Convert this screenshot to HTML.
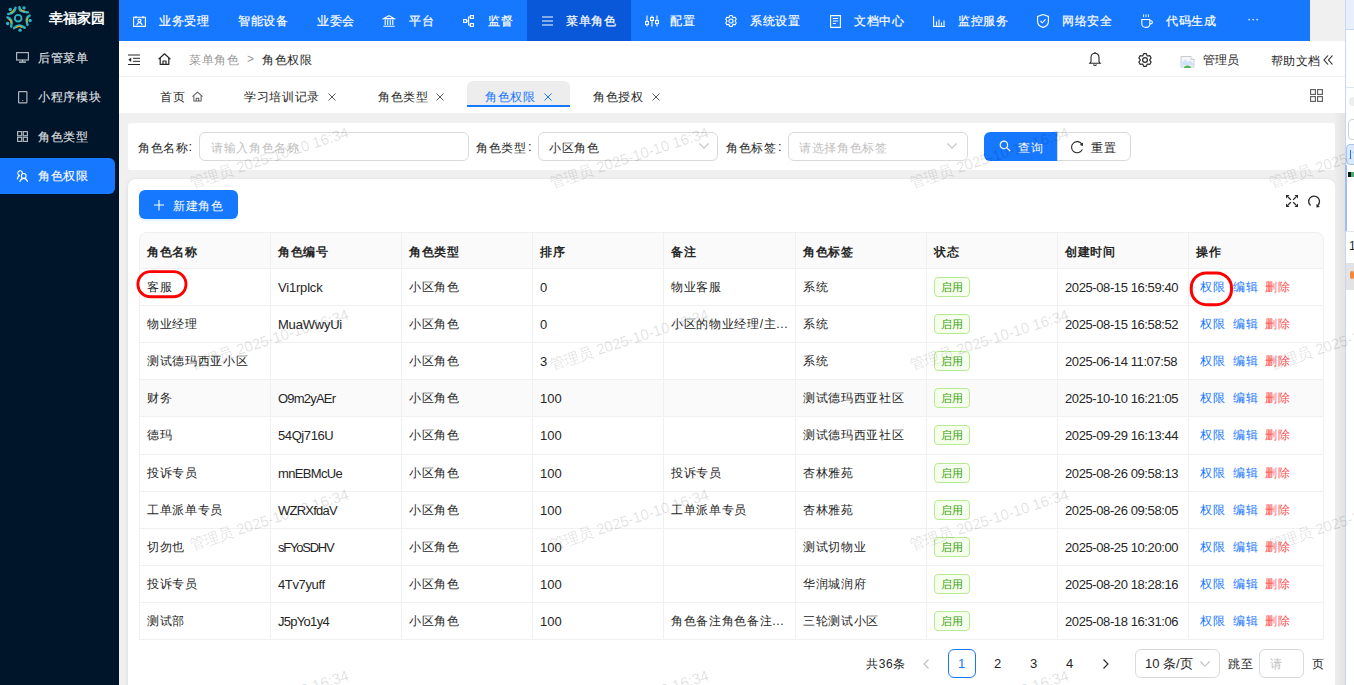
<!DOCTYPE html>
<html><head><meta charset="utf-8">
<style>
*{box-sizing:border-box;margin:0;padding:0}
html,body{width:1354px;height:685px;overflow:hidden;background:#f0f0f0;font-family:"Liberation Sans",sans-serif;font-size:13px;color:#262626}
.a{position:absolute;white-space:nowrap}
svg{position:absolute;overflow:visible}
#side{position:absolute;left:0;top:0;width:119px;height:685px;background:#001529}
#nav{position:absolute;left:119px;top:0;width:1191px;height:41px;background:#1677ff}
.nt{position:absolute;top:14px;color:#fff;font-size:12px;letter-spacing:.67px;line-height:14px;-webkit-text-stroke:.2px #fff}
.st{position:absolute;left:38px;color:rgba(255,255,255,.85);font-size:12px;letter-spacing:.67px;line-height:14px;-webkit-text-stroke:.15px rgba(255,255,255,.85)}
.c{position:absolute;white-space:nowrap;font-size:12px;letter-spacing:.67px;line-height:14px;color:#262626}
.l{position:absolute;white-space:nowrap;font-size:13px;line-height:14px;color:#262626}
.b{font-weight:bold}
.wm{position:absolute;color:rgba(0,0,0,.13);font-size:15px;letter-spacing:-0.1px;transform:rotate(-18deg);transform-origin:0 100%;white-space:nowrap;line-height:16px}
</style></head><body>
<div id="side">
  <!-- logo -->
  <svg style="left:3px;top:3px" width="32" height="32" viewBox="0 0 685 685">
    <g fill="none" stroke-linecap="round">
      <g stroke="#2ab4c2" stroke-width="52">
        <path d="M268 100 Q245 220 110 238"/><path d="M352 90 Q345 200 535 200"/><path d="M570 270 Q470 310 525 470"/><path d="M235 540 Q345 430 465 530"/><path d="M95 310 Q215 350 175 505"/>
      </g>
      <g stroke="#e8a81c" stroke-width="26">
        <path d="M228 140 Q215 195 165 205"/><path d="M390 140 Q392 172 460 175"/><path d="M528 318 Q500 345 515 410"/><path d="M285 525 Q345 478 400 520"/><path d="M130 352 Q190 375 180 430"/>
      </g>
      <circle cx="325" cy="325" r="72" stroke="#2ab4c2" stroke-width="40"/>
    </g>
    <g fill="#2ab4c2"><circle cx="155" cy="140" r="36"/><circle cx="450" cy="105" r="36"/><circle cx="580" cy="375" r="36"/><circle cx="365" cy="582" r="36"/><circle cx="100" cy="440" r="36"/></g>
  </svg>
  <div class="a" style="left:49px;top:10px;color:#fff;font-weight:bold;font-size:14px;line-height:16px">幸福家园</div>

  <!-- items -->
  <svg style="left:16px;top:52px" width="13" height="11" viewBox="0 0 13 11" fill="none" stroke="rgba(255,255,255,.68)" stroke-width="1.2">
    <rect x="0.6" y="0.6" width="11.8" height="7.4"/><path d="M6.5 8v1.4"/><path d="M3 9.3h7v1.6H3z" fill="rgba(255,255,255,.68)" stroke="none"/>
  </svg>
  <div class="st" style="top:51px">后管菜单</div>

  <svg style="left:17.5px;top:90.5px" width="10" height="13" viewBox="0 0 10 13" fill="none" stroke="rgba(255,255,255,.68)" stroke-width="1.2">
    <rect x="0.6" y="0.6" width="8.3" height="11.3" rx="0.6"/><circle cx="4.75" cy="9.6" r="0.6" fill="rgba(255,255,255,.68)" stroke="none"/>
  </svg>
  <div class="st" style="top:90px">小程序模块</div>

  <svg style="left:17px;top:131px" width="11" height="11" viewBox="0 0 11 11" fill="none" stroke="rgba(255,255,255,.68)" stroke-width="1.2">
    <rect x="0.6" y="0.6" width="4.1" height="4.1"/><rect x="6.3" y="0.6" width="4.1" height="4.1"/>
    <rect x="0.6" y="6.3" width="4.1" height="4.1"/><rect x="6.3" y="6.3" width="4.1" height="4.1"/>
  </svg>
  <div class="st" style="top:130px">角色类型</div>

  <div class="a" style="left:0;top:158px;width:115px;height:36px;background:#1677ff;border-radius:0 6px 6px 0"></div>
  <svg style="left:16px;top:170px" width="12" height="12" viewBox="0 0 12 12" fill="none" stroke="#fff" stroke-width="1.1" stroke-linecap="round">
    <path d="M6.3 3.9A2.3 2.3 0 1 0 3.4 5.3"/><path d="M1.3 9C1.8 7.3 2.6 6.2 3.4 5.5"/>
    <circle cx="7.7" cy="5.9" r="2.4"/><path d="M3.9 11.5C4.6 9.5 6 8.4 7.7 8.4S10.8 9.5 11.5 11.5"/>
  </svg>
  <div class="st" style="top:169px;color:#fff">角色权限</div>
</div>

<div id="nav">
  <div class="a" style="left:408px;top:0;width:104px;height:41px;background:#0958d9"></div>
  <!-- icons -->
  <svg style="left:14px;top:16px" width="13" height="11" viewBox="0 0 13 11" fill="none" stroke="#fff" stroke-width="1.1">
    <path d="M0.6 1.2h11.8v9.2H0.6z"/><path d="M3 0v2.4M10 0v2.4"/><circle cx="6.5" cy="4.6" r="1.5"/><path d="M3.8 9c0.4-1.6 1.4-2.4 2.7-2.4s2.3 0.8 2.7 2.4"/>
  </svg>
  <div class="nt" style="left:40px">业务受理</div>
  <div class="nt" style="left:119px">智能设备</div>
  <div class="nt" style="left:198px">业委会</div>
  <svg style="left:264px;top:15px" width="12" height="12" viewBox="0 0 12 12" fill="none" stroke="#fff" stroke-width="1.1">
    <path d="M0.8 3.6L6 0.7l5.2 2.9z"/><path d="M2.2 4.5v5.6M4.7 4.5v5.6M7.3 4.5v5.6M9.8 4.5v5.6M0.3 11.3h11.4"/>
  </svg>
  <div class="nt" style="left:290px">平台</div>
  <svg style="left:344px;top:15px" width="11" height="12" viewBox="0 0 11 12" fill="none" stroke="#fff" stroke-width="1.1">
    <rect x="0.6" y="4.6" width="3" height="2.8"/><rect x="7.4" y="0.6" width="3" height="2.8"/><rect x="7.4" y="8.6" width="3" height="2.8"/><path d="M3.6 6h2v-4h1.8M5.6 6v4h1.8"/>
  </svg>
  <div class="nt" style="left:369px">监督</div>
  <svg style="left:423px;top:16px" width="11" height="10" viewBox="0 0 11 10" fill="none" stroke="#fff" stroke-width="1">
    <path d="M0 1h11M0 5h11M0 9h11"/>
  </svg>
  <div class="nt" style="left:447px">菜单角色</div>
  <svg style="left:527px;top:15px" width="12" height="12" viewBox="0 0 12 12" fill="none" stroke="#fff" stroke-width="1.1">
    <path d="M1 0.5v11M6 0.5v11M11 0.5v11"/><rect x="-0.4" y="6.5" width="2.8" height="3" fill="#1677ff"/><rect x="4.6" y="2.5" width="2.8" height="3" fill="#1677ff"/><rect x="9.6" y="5.5" width="2.8" height="3" fill="#1677ff"/>
  </svg>
  <div class="nt" style="left:551px">配置</div>
  <svg style="left:606px;top:15px" width="12" height="12" viewBox="0 0 14 14" fill="none" stroke="#fff" stroke-width="1.3" stroke-linejoin="round">
    <path d="M5.71 0.63 L8.29 0.63 L9.30 3.02 L11.87 2.70 L13.16 4.93 L11.60 7.00 L13.16 9.07 L11.87 11.30 L9.30 10.98 L8.29 13.37 L5.71 13.37 L4.70 10.98 L2.13 11.30 L0.84 9.07 L2.40 7.00 L0.84 4.93 L2.13 2.70 L4.70 3.02Z"/><circle cx="7" cy="7" r="2.4"/>
  </svg>
  <div class="nt" style="left:631px">系统设置</div>
  <svg style="left:711px;top:15px" width="11" height="13" viewBox="0 0 11 13" fill="none" stroke="#fff" stroke-width="1.1">
    <path d="M0.6 0.6h9.8v11.8H0.6z"/><path d="M2.8 3.5h5.4M2.8 6h5.4M2.8 8.5h3"/>
  </svg>
  <div class="nt" style="left:735px">文档中心</div>
  <svg style="left:814px;top:16px" width="12" height="11" viewBox="0 0 12 11" fill="none" stroke="#fff" stroke-width="1.1">
    <path d="M0.6 0v10.4H12"/><path d="M3.5 9.5v-4M6 9.5v-6M8.5 9.5v-3M11 9.5v-5"/>
  </svg>
  <div class="nt" style="left:839px">监控服务</div>
  <svg style="left:918px;top:14px" width="12" height="14" viewBox="0 0 12 14" fill="none" stroke="#fff" stroke-width="1.1">
    <path d="M6 0.6L11.4 2.4v5C11.4 10.6 8.6 12.6 6 13.4 3.4 12.6 0.6 10.6 0.6 7.4v-5z"/><path d="M3.5 7l1.8 1.8L8.6 5.3"/>
  </svg>
  <div class="nt" style="left:943px">网络安全</div>
  <svg style="left:1022px;top:14px" width="12" height="14" viewBox="0 0 12 14" fill="none" stroke="#fff" stroke-width="1.1">
    <path d="M0.8 5.5h8v4.5c0 2-1.6 3.4-4 3.4s-4-1.4-4-3.4z"/><path d="M8.8 6.8h1c1 0 1.6 0.6 1.6 1.5s-0.6 1.6-1.6 1.6h-1"/><path d="M2.6 0.3v2.8M5 0.3v2.8M7.4 0.3v2.8" stroke-width="0.9"/>
  </svg>
  <div class="nt" style="left:1047px">代码生成</div>
  <div class="a" style="left:1128px;top:12px;color:#fff;font-size:12px;line-height:14px;letter-spacing:0px">···</div>
</div>

<div class="a" style="left:119px;top:41px;width:1226px;height:35px;background:#fff"></div>
<div class="a" style="left:119px;top:76px;width:1226px;height:1px;background:#f0f0f0"></div>
<svg style="left:128px;top:54px" width="12" height="11" viewBox="0 0 12 11" fill="none" stroke="#262626" stroke-width="1">
<path d="M0 1h12M5 4.3h7M5 7.3h7M0 10.5h12"/><path d="M3.2 3.6L0.4 5.8 3.2 8z" fill="#262626" stroke="none"/></svg>
<svg style="left:158px;top:53px" width="13" height="12" viewBox="0 0 13 12" fill="none" stroke="#262626" stroke-width="1.2" stroke-linejoin="round">
<path d="M0.6 6.2L6.5 0.8l5.9 5.4"/><path d="M2.2 5v6.4h8.6V5"/><path d="M5 11.4V8h3v3.4"/></svg>
<div class="c" style="left:189px;top:53px;color:rgba(0,0,0,.45)">菜单角色</div>
<div class="l" style="left:247px;top:52px;color:rgba(0,0,0,.45);font-size:12px">&gt;</div>
<div class="c" style="left:262px;top:53px;">角色权限</div>
<svg style="left:1089px;top:52px" width="12" height="14" viewBox="0 0 12 14" fill="none" stroke="#262626" stroke-width="1.1">
<path d="M6 1.2c-2.4 0-4 1.8-4 4.3v4.3L0.8 11.2h10.4L10 9.8V5.5c0-2.5-1.6-4.3-4-4.3z"/><path d="M6 0v1.2M4.5 12.5c0.3 0.8 0.8 1 1.5 1s1.2-0.2 1.5-1"/></svg>
<svg style="left:1138px;top:53px" width="14" height="14" viewBox="0 0 14 14" fill="none" stroke="#262626" stroke-width="1.2" stroke-linejoin="round">
<path d="M5.71 0.63 L8.29 0.63 L9.30 3.02 L11.87 2.70 L13.16 4.93 L11.60 7.00 L13.16 9.07 L11.87 11.30 L9.30 10.98 L8.29 13.37 L5.71 13.37 L4.70 10.98 L2.13 11.30 L0.84 9.07 L2.40 7.00 L0.84 4.93 L2.13 2.70 L4.70 3.02Z"/><circle cx="7" cy="7" r="2.4"/></svg>
<svg style="left:1180px;top:55px" width="15" height="13" viewBox="0 0 15 13">
<path d="M1 1.5h10l3 3v7.5H1z" fill="#f4f6f8" stroke="#c9ced6" stroke-width="1"/><path d="M11 1.5v3h3" fill="#fff" stroke="#c9ced6"/>
<path d="M2 7.5l3-3 3 2.5 2-1.5 3 2.5v2.5H2z" fill="#cfe3f7"/><path d="M4 13c0-1.5 1.5-2.5 3.5-2.5S11 11.5 11 13z" fill="#52b452"/></svg>
<div class="c" style="left:1203px;top:53px;letter-spacing:.1px">管理员</div>
<div class="c" style="left:1271px;top:54px;letter-spacing:.4px">帮助文档</div>
<svg style="left:1323px;top:55px" width="10" height="10" viewBox="0 0 10 10" fill="none" stroke="#262626" stroke-width="1.1">
<path d="M5 0.5L1 5l4 4.5M9.5 0.5L5.5 5l4 4.5"/></svg>
<div class="a" style="left:119px;top:77px;width:1226px;height:36px;background:#fff"></div>
<div class="c" style="left:160px;top:90px;">首页</div>
<svg style="left:192px;top:91px" width="11" height="11" viewBox="0 0 13 12" fill="none" stroke="#595959" stroke-width="1.2" stroke-linejoin="round">
<path d="M0.6 6.2L6.5 0.8l5.9 5.4"/><path d="M2.2 5v6.4h8.6V5"/><path d="M5 11.4V8h3v3.4"/></svg>
<div class="c" style="left:244px;top:90px;">学习培训记录</div>
<svg style="left:328px;top:93px" width="8" height="8" viewBox="0 0 8 8" fill="none" stroke="#595959" stroke-width="1"><path d="M0.5 0.5l7 7M7.5 0.5l-7 7"/></svg>
<div class="c" style="left:378px;top:90px;">角色类型</div>
<svg style="left:436px;top:93px" width="8" height="8" viewBox="0 0 8 8" fill="none" stroke="#595959" stroke-width="1"><path d="M0.5 0.5l7 7M7.5 0.5l-7 7"/></svg>
<div class="a" style="left:467px;top:81px;width:103px;height:26px;background:#ededed;border-radius:6px 6px 0 0"></div>
<div class="a" style="left:467px;top:105px;width:103px;height:2px;background:#1677ff"></div>
<div class="c" style="left:485px;top:90px;color:#1677ff">角色权限</div>
<svg style="left:544px;top:93px" width="8" height="8" viewBox="0 0 8 8" fill="none" stroke="#1677ff" stroke-width="1"><path d="M0.5 0.5l7 7M7.5 0.5l-7 7"/></svg>
<div class="c" style="left:593px;top:90px;">角色授权</div>
<svg style="left:652px;top:93px" width="8" height="8" viewBox="0 0 8 8" fill="none" stroke="#595959" stroke-width="1"><path d="M0.5 0.5l7 7M7.5 0.5l-7 7"/></svg>
<svg style="left:1310px;top:89px" width="13" height="13" viewBox="0 0 13 13" fill="none" stroke="#595959" stroke-width="1.1">
<rect x="0.6" y="0.6" width="4.8" height="4.8"/><rect x="7.6" y="0.6" width="4.8" height="4.8"/><rect x="0.6" y="7.6" width="4.8" height="4.8"/><rect x="7.6" y="7.6" width="4.8" height="4.8"/></svg>
<div class="a" style="left:128px;top:123px;width:1207px;height:47px;background:#fff;border-radius:2px"></div>
<div class="c" style="left:138px;top:141px;">角色名称</div>
<div class="l" style="left:188.5px;top:140px;font-size:13px">:</div>
<div class="a" style="left:199px;top:132px;width:270px;height:29px;border:1px solid #d9d9d9;border-radius:6px;background:#fff"></div>
<div class="c" style="left:211px;top:141px;color:#bfbfbf">请输入角色名称</div>
<div class="c" style="left:476px;top:141px;">角色类型</div>
<div class="l" style="left:528px;top:140px;font-size:13px">:</div>
<div class="a" style="left:538px;top:132px;width:180px;height:29px;border:1px solid #d9d9d9;border-radius:6px;background:#fff"></div>
<div class="c" style="left:549px;top:141px;">小区角色</div>
<svg style="left:699px;top:143px" width="10" height="6" viewBox="0 0 10 6" fill="none" stroke="#bfbfbf" stroke-width="1.1"><path d="M0.5 0.5L5 5.3 9.5 0.5"/></svg>
<div class="c" style="left:726px;top:141px;">角色标签</div>
<div class="l" style="left:778px;top:140px;font-size:13px">:</div>
<div class="a" style="left:788px;top:132px;width:180px;height:29px;border:1px solid #d9d9d9;border-radius:6px;background:#fff"></div>
<div class="c" style="left:799px;top:141px;color:#bfbfbf">请选择角色标签</div>
<svg style="left:947px;top:143px" width="10" height="6" viewBox="0 0 10 6" fill="none" stroke="#bfbfbf" stroke-width="1.1"><path d="M0.5 0.5L5 5.3 9.5 0.5"/></svg>
<div class="a" style="left:984px;top:132px;width:74px;height:29px;background:#1677ff;border-radius:6px 0 0 6px"></div>
<svg style="left:999px;top:140px" width="12" height="12" viewBox="0 0 12 12" fill="none" stroke="#fff" stroke-width="1.2">
<circle cx="4.9" cy="4.9" r="3.7"/><path d="M7.6 7.6L11.2 11.2"/></svg>
<div class="c" style="left:1018px;top:141px;color:#fff">查询</div>
<div class="a" style="left:1057px;top:132px;width:74px;height:29px;border:1px solid #d9d9d9;border-radius:0 6px 6px 0;background:#fff"></div>
<svg style="left:1071px;top:141px" width="12" height="12" viewBox="0 0 12 12" fill="none" stroke="#262626" stroke-width="1.1">
<path d="M11 3.4A5.6 5.6 0 1 0 11.3 8.4"/><path d="M12 1.6L11.8 5 8.8 4.1z" fill="#262626" stroke="none"/></svg>
<div class="c" style="left:1091px;top:141px;">重置</div>
<div class="a" style="left:128px;top:179px;width:1207px;height:520px;background:#fff;border-radius:8px;box-shadow:0 1px 5px rgba(0,0,0,.09)"></div>
<div class="a" style="left:139px;top:190px;width:99px;height:29px;background:#1677ff;border-radius:6px;box-shadow:0 2px 0 rgba(5,145,255,.1)"></div>
<svg style="left:154px;top:200px" width="10" height="10" viewBox="0 0 10 10" fill="none" stroke="#fff" stroke-width="1.1"><path d="M5 0v10.6M0 5h10"/></svg>
<div class="c" style="left:173px;top:198.5px;color:#fff">新建角色</div>
<svg style="left:1286px;top:195px" width="12" height="12" viewBox="0 0 12 12" fill="none" stroke="#262626" stroke-width="1.3">
<path d="M2 2l2.9 2.9M10 2L7.1 4.9M2 10l2.9-2.9M10 10L7.1 7.1"/>
<path d="M0 0h3.6L0 3.6zM12 0H8.4L12 3.6zM0 12h3.6L0 8.4zM12 12H8.4L12 8.4z" fill="#262626" stroke="none"/></svg>
<svg style="left:1307px;top:195px" width="13" height="13" viewBox="0 0 13 13" fill="none" stroke="#262626" stroke-width="1.3">
<path d="M3.6 10.6A5.4 5.4 0 1 1 11 10.2"/><path d="M9.6 8.8L9.4 12.4 12.8 12z" fill="#262626" stroke="none"/></svg>
<div class="a" style="left:139px;top:232px;width:1185px;height:37px;background:#fafafa;border:1px solid #f0f0f0;border-bottom:0;border-radius:8px 8px 0 0"></div>
<div class="a" style="left:139px;top:379px;width:1184px;height:37px;background:#fafafa"></div>
<div class="a" style="left:139px;top:268px;width:1184px;height:1px;background:#f0f0f0"></div>
<div class="a" style="left:139px;top:305px;width:1184px;height:1px;background:#f0f0f0"></div>
<div class="a" style="left:139px;top:342px;width:1184px;height:1px;background:#f0f0f0"></div>
<div class="a" style="left:139px;top:379px;width:1184px;height:1px;background:#f0f0f0"></div>
<div class="a" style="left:139px;top:416px;width:1184px;height:1px;background:#f0f0f0"></div>
<div class="a" style="left:139px;top:454px;width:1184px;height:1px;background:#f0f0f0"></div>
<div class="a" style="left:139px;top:491px;width:1184px;height:1px;background:#f0f0f0"></div>
<div class="a" style="left:139px;top:528px;width:1184px;height:1px;background:#f0f0f0"></div>
<div class="a" style="left:139px;top:565px;width:1184px;height:1px;background:#f0f0f0"></div>
<div class="a" style="left:139px;top:602px;width:1184px;height:1px;background:#f0f0f0"></div>
<div class="a" style="left:139px;top:639px;width:1184px;height:1px;background:#f0f0f0"></div>
<div class="a" style="left:139px;top:242px;width:1px;height:397px;background:#f0f0f0"></div>
<div class="a" style="left:270px;top:232px;width:1px;height:407px;background:#f0f0f0"></div>
<div class="a" style="left:401px;top:232px;width:1px;height:407px;background:#f0f0f0"></div>
<div class="a" style="left:532px;top:232px;width:1px;height:407px;background:#f0f0f0"></div>
<div class="a" style="left:663px;top:232px;width:1px;height:407px;background:#f0f0f0"></div>
<div class="a" style="left:795px;top:232px;width:1px;height:407px;background:#f0f0f0"></div>
<div class="a" style="left:926px;top:232px;width:1px;height:407px;background:#f0f0f0"></div>
<div class="a" style="left:1057px;top:232px;width:1px;height:407px;background:#f0f0f0"></div>
<div class="a" style="left:1188px;top:232px;width:1px;height:407px;background:#f0f0f0"></div>
<div class="a" style="left:1323px;top:242px;width:1px;height:397px;background:#f0f0f0"></div>
<div class="c" style="left:147px;top:245px;font-weight:bold">角色名称</div>
<div class="c" style="left:278px;top:245px;font-weight:bold">角色编号</div>
<div class="c" style="left:409px;top:245px;font-weight:bold">角色类型</div>
<div class="c" style="left:540px;top:245px;font-weight:bold">排序</div>
<div class="c" style="left:671px;top:245px;font-weight:bold">备注</div>
<div class="c" style="left:803px;top:245px;font-weight:bold">角色标签</div>
<div class="c" style="left:934px;top:245px;font-weight:bold">状态</div>
<div class="c" style="left:1065px;top:245px;font-weight:bold">创建时间</div>
<div class="c" style="left:1196px;top:245px;font-weight:bold">操作</div>
<div class="c" style="left:147px;top:280px;">客服</div>
<div class="l" style="left:278px;top:281px;letter-spacing:-0.19px">Vi1rplck</div>
<div class="c" style="left:409px;top:280px;">小区角色</div>
<div class="l" style="left:540px;top:281px;">0</div>
<div class="c" style="left:671px;top:280px;">物业客服</div>
<div class="c" style="left:803px;top:280px;">系统</div>
<div class="a" style="left:934px;top:277px;width:36px;height:20px;background:#f6ffed;border:1px solid #b7eb8f;border-radius:4px"></div>
<div class="c" style="left:941px;top:280px;color:#389e0d;font-size:11px;letter-spacing:.3px;line-height:14px">启用</div>
<div class="l" style="left:1065px;top:281px;letter-spacing:-0.4px">2025-08-15 16:59:40</div>
<div class="c" style="left:1200px;top:280px;color:#1677ff">权限</div>
<div class="c" style="left:1233px;top:280px;color:#1677ff">编辑</div>
<div class="c" style="left:1265px;top:280px;color:#ff4d4f">删除</div>
<div class="c" style="left:147px;top:317px;">物业经理</div>
<div class="l" style="left:278px;top:318px;letter-spacing:-0.21px">MuaWwyUi</div>
<div class="c" style="left:409px;top:317px;">小区角色</div>
<div class="l" style="left:540px;top:318px;">0</div>
<div class="c" style="left:671px;top:317px;">小区的物业经理/主...</div>
<div class="c" style="left:803px;top:317px;">系统</div>
<div class="a" style="left:934px;top:314px;width:36px;height:20px;background:#f6ffed;border:1px solid #b7eb8f;border-radius:4px"></div>
<div class="c" style="left:941px;top:317px;color:#389e0d;font-size:11px;letter-spacing:.3px;line-height:14px">启用</div>
<div class="l" style="left:1065px;top:318px;letter-spacing:-0.4px">2025-08-15 16:58:52</div>
<div class="c" style="left:1200px;top:317px;color:#1677ff">权限</div>
<div class="c" style="left:1233px;top:317px;color:#1677ff">编辑</div>
<div class="c" style="left:1265px;top:317px;color:#ff4d4f">删除</div>
<div class="c" style="left:147px;top:354px;">测试德玛西亚小区</div>
<div class="c" style="left:409px;top:354px;">小区角色</div>
<div class="l" style="left:540px;top:355px;">3</div>
<div class="c" style="left:803px;top:354px;">系统</div>
<div class="a" style="left:934px;top:351px;width:36px;height:20px;background:#f6ffed;border:1px solid #b7eb8f;border-radius:4px"></div>
<div class="c" style="left:941px;top:354px;color:#389e0d;font-size:11px;letter-spacing:.3px;line-height:14px">启用</div>
<div class="l" style="left:1065px;top:355px;letter-spacing:-0.4px">2025-06-14 11:07:58</div>
<div class="c" style="left:1200px;top:354px;color:#1677ff">权限</div>
<div class="c" style="left:1233px;top:354px;color:#1677ff">编辑</div>
<div class="c" style="left:1265px;top:354px;color:#ff4d4f">删除</div>
<div class="c" style="left:147px;top:391px;">财务</div>
<div class="l" style="left:278px;top:392px;letter-spacing:-0.79px">O9m2yAEr</div>
<div class="c" style="left:409px;top:391px;">小区角色</div>
<div class="l" style="left:540px;top:392px;">100</div>
<div class="c" style="left:803px;top:391px;">测试德玛西亚社区</div>
<div class="a" style="left:934px;top:388px;width:36px;height:20px;background:#f6ffed;border:1px solid #b7eb8f;border-radius:4px"></div>
<div class="c" style="left:941px;top:391px;color:#389e0d;font-size:11px;letter-spacing:.3px;line-height:14px">启用</div>
<div class="l" style="left:1065px;top:392px;letter-spacing:-0.4px">2025-10-10 16:21:05</div>
<div class="c" style="left:1200px;top:391px;color:#1677ff">权限</div>
<div class="c" style="left:1233px;top:391px;color:#1677ff">编辑</div>
<div class="c" style="left:1265px;top:391px;color:#ff4d4f">删除</div>
<div class="c" style="left:147px;top:428px;">德玛</div>
<div class="l" style="left:278px;top:429px;letter-spacing:-0.4px">54Qj716U</div>
<div class="c" style="left:409px;top:428px;">小区角色</div>
<div class="l" style="left:540px;top:429px;">100</div>
<div class="c" style="left:803px;top:428px;">测试德玛西亚社区</div>
<div class="a" style="left:934px;top:425px;width:36px;height:20px;background:#f6ffed;border:1px solid #b7eb8f;border-radius:4px"></div>
<div class="c" style="left:941px;top:428px;color:#389e0d;font-size:11px;letter-spacing:.3px;line-height:14px">启用</div>
<div class="l" style="left:1065px;top:429px;letter-spacing:-0.4px">2025-09-29 16:13:44</div>
<div class="c" style="left:1200px;top:428px;color:#1677ff">权限</div>
<div class="c" style="left:1233px;top:428px;color:#1677ff">编辑</div>
<div class="c" style="left:1265px;top:428px;color:#ff4d4f">删除</div>
<div class="c" style="left:147px;top:466px;">投诉专员</div>
<div class="l" style="left:278px;top:467px;letter-spacing:-0.66px">mnEBMcUe</div>
<div class="c" style="left:409px;top:466px;">小区角色</div>
<div class="l" style="left:540px;top:467px;">100</div>
<div class="c" style="left:671px;top:466px;">投诉专员</div>
<div class="c" style="left:803px;top:466px;">杏林雅苑</div>
<div class="a" style="left:934px;top:463px;width:36px;height:20px;background:#f6ffed;border:1px solid #b7eb8f;border-radius:4px"></div>
<div class="c" style="left:941px;top:466px;color:#389e0d;font-size:11px;letter-spacing:.3px;line-height:14px">启用</div>
<div class="l" style="left:1065px;top:467px;letter-spacing:-0.4px">2025-08-26 09:58:13</div>
<div class="c" style="left:1200px;top:466px;color:#1677ff">权限</div>
<div class="c" style="left:1233px;top:466px;color:#1677ff">编辑</div>
<div class="c" style="left:1265px;top:466px;color:#ff4d4f">删除</div>
<div class="c" style="left:147px;top:503px;">工单派单专员</div>
<div class="l" style="left:278px;top:504px;letter-spacing:-0.77px">WZRXfdaV</div>
<div class="c" style="left:409px;top:503px;">小区角色</div>
<div class="l" style="left:540px;top:504px;">100</div>
<div class="c" style="left:671px;top:503px;">工单派单专员</div>
<div class="c" style="left:803px;top:503px;">杏林雅苑</div>
<div class="a" style="left:934px;top:500px;width:36px;height:20px;background:#f6ffed;border:1px solid #b7eb8f;border-radius:4px"></div>
<div class="c" style="left:941px;top:503px;color:#389e0d;font-size:11px;letter-spacing:.3px;line-height:14px">启用</div>
<div class="l" style="left:1065px;top:504px;letter-spacing:-0.4px">2025-08-26 09:58:05</div>
<div class="c" style="left:1200px;top:503px;color:#1677ff">权限</div>
<div class="c" style="left:1233px;top:503px;color:#1677ff">编辑</div>
<div class="c" style="left:1265px;top:503px;color:#ff4d4f">删除</div>
<div class="c" style="left:147px;top:540px;">切勿也</div>
<div class="l" style="left:278px;top:541px;letter-spacing:-1.23px">sFYoSDHV</div>
<div class="c" style="left:409px;top:540px;">小区角色</div>
<div class="l" style="left:540px;top:541px;">100</div>
<div class="c" style="left:803px;top:540px;">测试切物业</div>
<div class="a" style="left:934px;top:537px;width:36px;height:20px;background:#f6ffed;border:1px solid #b7eb8f;border-radius:4px"></div>
<div class="c" style="left:941px;top:540px;color:#389e0d;font-size:11px;letter-spacing:.3px;line-height:14px">启用</div>
<div class="l" style="left:1065px;top:541px;letter-spacing:-0.4px">2025-08-25 10:20:00</div>
<div class="c" style="left:1200px;top:540px;color:#1677ff">权限</div>
<div class="c" style="left:1233px;top:540px;color:#1677ff">编辑</div>
<div class="c" style="left:1265px;top:540px;color:#ff4d4f">删除</div>
<div class="c" style="left:147px;top:577px;">投诉专员</div>
<div class="l" style="left:278px;top:578px;letter-spacing:-0.37px">4Tv7yuff</div>
<div class="c" style="left:409px;top:577px;">小区角色</div>
<div class="l" style="left:540px;top:578px;">100</div>
<div class="c" style="left:803px;top:577px;">华润城润府</div>
<div class="a" style="left:934px;top:574px;width:36px;height:20px;background:#f6ffed;border:1px solid #b7eb8f;border-radius:4px"></div>
<div class="c" style="left:941px;top:577px;color:#389e0d;font-size:11px;letter-spacing:.3px;line-height:14px">启用</div>
<div class="l" style="left:1065px;top:578px;letter-spacing:-0.4px">2025-08-20 18:28:16</div>
<div class="c" style="left:1200px;top:577px;color:#1677ff">权限</div>
<div class="c" style="left:1233px;top:577px;color:#1677ff">编辑</div>
<div class="c" style="left:1265px;top:577px;color:#ff4d4f">删除</div>
<div class="c" style="left:147px;top:614px;">测试部</div>
<div class="l" style="left:278px;top:615px;letter-spacing:-0.71px">J5pYo1y4</div>
<div class="c" style="left:409px;top:614px;">小区角色</div>
<div class="l" style="left:540px;top:615px;">100</div>
<div class="c" style="left:671px;top:614px;">角色备注角色备注...</div>
<div class="c" style="left:803px;top:614px;">三轮测试小区</div>
<div class="a" style="left:934px;top:611px;width:36px;height:20px;background:#f6ffed;border:1px solid #b7eb8f;border-radius:4px"></div>
<div class="c" style="left:941px;top:614px;color:#389e0d;font-size:11px;letter-spacing:.3px;line-height:14px">启用</div>
<div class="l" style="left:1065px;top:615px;letter-spacing:-0.4px">2025-08-18 16:31:06</div>
<div class="c" style="left:1200px;top:614px;color:#1677ff">权限</div>
<div class="c" style="left:1233px;top:614px;color:#1677ff">编辑</div>
<div class="c" style="left:1265px;top:614px;color:#ff4d4f">删除</div>
<div class="c" style="left:866px;top:657px;">共36条</div>
<svg style="left:923px;top:659px" width="6" height="10" viewBox="0 0 6 10" fill="none" stroke="#bfbfbf" stroke-width="1.1"><path d="M5.5 0.5L1 5l4.5 4.5"/></svg>
<div class="a" style="left:948px;top:649px;width:28px;height:29px;border:1px solid #1677ff;border-radius:6px"></div>
<div class="l" style="left:958px;top:657px;color:#1677ff">1</div>
<div class="l" style="left:994px;top:657px;">2</div>
<div class="l" style="left:1030px;top:657px;">3</div>
<div class="l" style="left:1066px;top:657px;">4</div>
<svg style="left:1103px;top:659px" width="6" height="10" viewBox="0 0 6 10" fill="none" stroke="#262626" stroke-width="1.1"><path d="M0.5 0.5L5 5l-4.5 4.5"/></svg>
<div class="a" style="left:1135px;top:649px;width:85px;height:29px;border:1px solid #d9d9d9;border-radius:6px"></div>
<div class="l" style="left:1145px;top:657px;">10 条/页</div>
<svg style="left:1200px;top:661px" width="10" height="6" viewBox="0 0 10 6" fill="none" stroke="#bfbfbf" stroke-width="1.1"><path d="M0.5 0.5L5 5.3 9.5 0.5"/></svg>
<div class="c" style="left:1228px;top:657px;">跳至</div>
<div class="a" style="left:1259px;top:649px;width:45px;height:29px;border:1px solid #d9d9d9;border-radius:6px"></div>
<div class="c" style="left:1270px;top:657px;color:#bfbfbf">请</div>
<div class="c" style="left:1312px;top:657px;">页</div>
<svg style="left:0;top:0" width="1354" height="685"><rect x="137.9" y="271.6" width="48.1" height="25.2" rx="12.6" fill="none" stroke="#ff0000" stroke-width="2.9"/><rect x="1191.25" y="272.9" width="40.25" height="31.8" rx="15" fill="none" stroke="#ff0000" stroke-width="3"/></svg>
<div class="a" style="left:1310px;top:0px;width:35px;height:41px;background:#f0f0f0"></div>
<div class="a" style="left:1335px;top:113px;width:10px;height:572px;background:linear-gradient(to right,#eeeeee,#e3e3e3)"></div>
<div class="a" style="left:1345px;top:0px;width:9px;height:685px;background:#fff"></div>
<div class="a" style="left:1346px;top:0px;width:8px;height:29px;background:#e9f0fb"></div>
<div class="a" style="left:1346px;top:29px;width:8px;height:1px;background:#c5d8f5"></div>
<div class="a" style="left:1346px;top:87px;width:8px;height:1px;background:#dfe6f0"></div>
<div class="a" style="left:1349px;top:97px;width:8px;height:9px;background:#eceef2;border-radius:4px"></div>
<div class="a" style="left:1348px;top:119px;width:10px;height:21px;border:1px solid #cfd3d9;border-radius:4px"></div>
<div class="a" style="left:1346px;top:144px;width:10px;height:21px;background:#dce8fb;border:1px solid #a9c4f0;border-radius:4px 0 0 4px"></div>
<div class="a" style="left:1350px;top:150px;width:1px;height:9px;background:#1677ff"></div>
<div class="a" style="left:1348px;top:172px;width:3px;height:5px;background:#111"></div>
<div class="a" style="left:1351px;top:172px;width:3px;height:5px;background:#3cb371"></div>
<div class="a" style="left:1346px;top:231px;width:8px;height:1px;background:#dfe6f0"></div>
<div class="a" style="left:1349px;top:239px;font-size:12px;line-height:14px;color:#262626">1</div>
<div class="a" style="left:1346px;top:263px;width:8px;height:27px;background:#e3e3e3"></div>
<div class="a" style="left:1350px;top:271px;width:4px;height:8px;background:#f0883e;border-radius:2px"></div>
<div class="a" style="left:1345px;top:0px;width:1px;height:685px;background:#c5d8f5"></div>
<div class="a" style="left:1345px;top:165px;width:2px;height:66px;background:#9dbcf0"></div>
<div class="wm" style="left:192.8px;top:175.2px">管理员 2025-10-10 16:34</div>
<div class="wm" style="left:552.5px;top:175.2px">管理员 2025-10-10 16:34</div>
<div class="wm" style="left:912.5px;top:175.2px">管理员 2025-10-10 16:34</div>
<div class="wm" style="left:1271.5px;top:175.2px">管理员 2025-10-10 16:34</div>
<div class="wm" style="left:192.8px;top:357px">管理员 2025-10-10 16:34</div>
<div class="wm" style="left:552.5px;top:357px">管理员 2025-10-10 16:34</div>
<div class="wm" style="left:912.5px;top:357px">管理员 2025-10-10 16:34</div>
<div class="wm" style="left:1271.5px;top:357px">管理员 2025-10-10 16:34</div>
<div class="wm" style="left:192.8px;top:536.8px">管理员 2025-10-10 16:34</div>
<div class="wm" style="left:552.5px;top:536.8px">管理员 2025-10-10 16:34</div>
<div class="wm" style="left:912.5px;top:536.8px">管理员 2025-10-10 16:34</div>
<div class="wm" style="left:1271.5px;top:536.8px">管理员 2025-10-10 16:34</div>
<div class="wm" style="left:192.8px;top:717.5px">管理员 2025-10-10 16:34</div>
<div class="wm" style="left:552.5px;top:717.5px">管理员 2025-10-10 16:34</div>
<div class="wm" style="left:912.5px;top:717.5px">管理员 2025-10-10 16:34</div>
<div class="wm" style="left:1271.5px;top:717.5px">管理员 2025-10-10 16:34</div>
</body></html>
